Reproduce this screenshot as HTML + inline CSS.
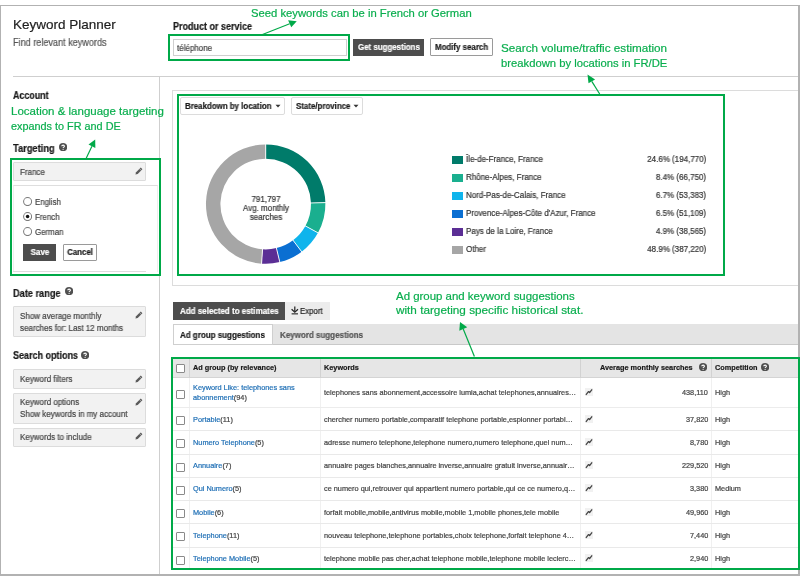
<!DOCTYPE html>
<html><head><meta charset="utf-8"><style>
html,body{margin:0;padding:0;background:#fff;}
#root{position:relative;width:800px;height:576px;overflow:hidden;background:#fff;font-family:"Liberation Sans",sans-serif;}
.t{position:absolute;white-space:nowrap;line-height:1;will-change:transform;-webkit-text-stroke:0.2px currentColor;}
.r{position:absolute;}
</style></head><body><div id="root">
<div class="r" style="left:0.00px;top:5.00px;width:800.00px;height:571.00px;border-top:1px solid #b2b2b2;border-left:1px solid #b2b2b2;border-right:2px solid #b2b2b2;border-bottom:2px solid #b2b2b2;box-sizing:border-box;"></div>
<div class="t" style="left:13.00px;top:17.77px;font-size:13.5px;font-weight:400;color:#1e1e1e;">Keyword Planner</div>
<div class="t" style="left:13.00px;top:37.85px;font-size:10.1px;font-weight:400;color:#555;transform:scaleX(0.9010);transform-origin:0 0;">Find relevant keywords</div>
<div class="r" style="left:13.00px;top:76.00px;width:785.00px;height:1.00px;background:#cfcfcf;"></div>
<div class="r" style="left:159.00px;top:76.00px;width:1.00px;height:498.00px;background:#cfcfcf;"></div>
<div class="t" style="left:173.20px;top:21.65px;font-size:10.1px;font-weight:700;color:#1a1a1a;transform:scaleX(0.8911);transform-origin:0 0;">Product or service</div>
<div class="r" style="left:172.50px;top:39.00px;width:174.00px;height:17.00px;border:1px solid #cfcfcf;box-sizing:border-box;background:#fff;"></div>
<div class="t" style="left:176.60px;top:43.57px;font-size:8.3px;font-weight:400;color:#444;transform:scaleX(0.9639);transform-origin:0 0;">téléphone</div>
<div class="r" style="left:168.20px;top:34.00px;width:181.60px;height:26.70px;border:2px solid #00a948;box-sizing:border-box;"></div>
<div class="r" style="left:353.00px;top:39.00px;width:71.00px;height:17.00px;background:#4d4d4d;"></div>
<div class="t" style="left:357.50px;top:43.17px;font-size:8.3px;font-weight:700;color:#fff;transform:scaleX(0.9518);transform-origin:0 0;">Get suggestions</div>
<div class="r" style="left:430.00px;top:38.00px;width:63.00px;height:18.00px;border:1px solid #9a9a9a;box-sizing:border-box;background:#fff;border-radius:1px;"></div>
<div class="t" style="left:434.80px;top:43.17px;font-size:8.3px;font-weight:700;color:#1a1a1a;transform:scaleX(0.9518);transform-origin:0 0;">Modify search</div>
<div class="t" style="left:251.40px;top:8.18px;font-size:11.25px;font-weight:400;color:#0aae4e;">Seed keywords can be in French or German</div>
<div class="t" style="left:501.25px;top:41.80px;font-size:11.7px;font-weight:400;color:#0aae4e;">Search volume/traffic estimation</div>
<div class="t" style="left:501.25px;top:57.78px;font-size:11.25px;font-weight:400;color:#0aae4e;">breakdown by locations in FR/DE</div>
<div class="t" style="left:12.80px;top:90.85px;font-size:10.1px;font-weight:700;color:#1a1a1a;transform:scaleX(0.8812);transform-origin:0 0;">Account</div>
<div class="t" style="left:11.00px;top:106.07px;font-size:11.5px;font-weight:400;color:#0aae4e;">Location &amp; language targeting</div>
<div class="t" style="left:11.00px;top:120.92px;font-size:10.85px;font-weight:400;color:#0aae4e;">expands to FR and DE</div>
<div class="t" style="left:13.20px;top:144.15px;font-size:10.1px;font-weight:700;color:#1a1a1a;transform:scaleX(0.9208);transform-origin:0 0;">Targeting</div>
<svg class="r" style="left:58.90px;top:142.90px" width="8.2" height="8.2" viewBox="0 0 10 10"><circle cx="5" cy="5" r="5" fill="#505050"/><path d="M3.4 3.9 C3.4 2.2 6.6 2.2 6.6 3.9 C6.6 5 5 5 5 6.2" stroke="#fff" stroke-width="1.3" fill="none"/><circle cx="5" cy="7.7" r="0.75" fill="#fff"/></svg>
<div class="r" style="left:12.90px;top:162.20px;width:132.70px;height:19.30px;border:1px solid #dcdcdc;box-sizing:border-box;background:#f2f2f2;border-radius:1px;"></div>
<div class="t" style="left:19.90px;top:168.07px;font-size:8.3px;font-weight:400;color:#444;transform:scaleX(0.9639);transform-origin:0 0;">France</div>
<svg class="r" style="left:134px;top:166px" width="10" height="10" viewBox="0 0 10 10"><path d="M1.4 8.6 L2.1 6.3 L6.8 1.6 L8.4 3.2 L3.7 7.9 Z" fill="#5a5a5a"/><path d="M5.5 2.7 L7.3 4.5" stroke="#f2f2f2" stroke-width="0.55"/></svg>
<div class="r" style="left:12.90px;top:185.00px;width:145.10px;height:87.00px;border-top:1px solid #dedede;border-left:1px solid #eee;border-right:1px solid #eee;box-sizing:border-box;background:#fff;"></div>
<div class="r" style="left:12.90px;top:270.50px;width:132.70px;height:1.00px;background:#dcdcdc;"></div>
<svg class="r" style="left:23.10px;top:196.60px" width="9.2" height="9.2" viewBox="0 0 10 10"><circle cx="5" cy="5" r="4.35" fill="#fff" stroke="#7a7a7a" stroke-width="1.1"/></svg>
<svg class="r" style="left:23.10px;top:211.60px" width="9.2" height="9.2" viewBox="0 0 10 10"><circle cx="5" cy="5" r="4.35" fill="#fff" stroke="#7a7a7a" stroke-width="1.1"/><circle cx="5" cy="5" r="1.9" fill="#111"/></svg>
<svg class="r" style="left:23.10px;top:226.60px" width="9.2" height="9.2" viewBox="0 0 10 10"><circle cx="5" cy="5" r="4.35" fill="#fff" stroke="#7a7a7a" stroke-width="1.1"/></svg>
<div class="t" style="left:35.40px;top:197.57px;font-size:8.3px;font-weight:400;color:#444;transform:scaleX(0.9518);transform-origin:0 0;">English</div>
<div class="t" style="left:35.40px;top:212.57px;font-size:8.3px;font-weight:400;color:#444;transform:scaleX(0.9518);transform-origin:0 0;">French</div>
<div class="t" style="left:35.40px;top:227.57px;font-size:8.3px;font-weight:400;color:#444;transform:scaleX(0.9518);transform-origin:0 0;">German</div>
<div class="r" style="left:23.30px;top:243.70px;width:33.10px;height:16.90px;background:#4d4d4d;"></div>
<div class="t" style="left:-60.15px;width:200px;text-align:center;top:248.07px;font-size:8.3px;font-weight:700;color:#fff;transform:scaleX(0.9518);transform-origin:50% 0;">Save</div>
<div class="r" style="left:63.20px;top:243.70px;width:34.30px;height:16.90px;border:1px solid #9a9a9a;box-sizing:border-box;background:#fff;border-radius:1px;"></div>
<div class="t" style="left:-19.65px;width:200px;text-align:center;top:248.07px;font-size:8.3px;font-weight:700;color:#1a1a1a;transform:scaleX(0.9518);transform-origin:50% 0;">Cancel</div>
<div class="r" style="left:10.20px;top:158.30px;width:150.50px;height:117.70px;border:2px solid #00a948;box-sizing:border-box;"></div>
<div class="t" style="left:13.00px;top:288.75px;font-size:10.1px;font-weight:700;color:#1a1a1a;transform:scaleX(0.9109);transform-origin:0 0;">Date range</div>
<svg class="r" style="left:64.50px;top:287.30px" width="8.2" height="8.2" viewBox="0 0 10 10"><circle cx="5" cy="5" r="5" fill="#505050"/><path d="M3.4 3.9 C3.4 2.2 6.6 2.2 6.6 3.9 C6.6 5 5 5 5 6.2" stroke="#fff" stroke-width="1.3" fill="none"/><circle cx="5" cy="7.7" r="0.75" fill="#fff"/></svg>
<div class="r" style="left:12.60px;top:306.40px;width:133.00px;height:30.60px;border:1px solid #dcdcdc;box-sizing:border-box;background:#f2f2f2;border-radius:1px;"></div>
<div class="t" style="left:20.00px;top:312.27px;font-size:8.3px;font-weight:400;color:#444;transform:scaleX(0.9639);transform-origin:0 0;">Show average monthly</div>
<div class="t" style="left:20.00px;top:323.67px;font-size:8.3px;font-weight:400;color:#444;transform:scaleX(0.9639);transform-origin:0 0;">searches for: Last 12 months</div>
<svg class="r" style="left:133.8px;top:310px" width="10" height="10" viewBox="0 0 10 10"><path d="M1.4 8.6 L2.1 6.3 L6.8 1.6 L8.4 3.2 L3.7 7.9 Z" fill="#5a5a5a"/><path d="M5.5 2.7 L7.3 4.5" stroke="#f2f2f2" stroke-width="0.55"/></svg>
<div class="t" style="left:13.00px;top:351.15px;font-size:10.1px;font-weight:700;color:#1a1a1a;transform:scaleX(0.8911);transform-origin:0 0;">Search options</div>
<svg class="r" style="left:81.30px;top:350.90px" width="8.2" height="8.2" viewBox="0 0 10 10"><circle cx="5" cy="5" r="5" fill="#505050"/><path d="M3.4 3.9 C3.4 2.2 6.6 2.2 6.6 3.9 C6.6 5 5 5 5 6.2" stroke="#fff" stroke-width="1.3" fill="none"/><circle cx="5" cy="7.7" r="0.75" fill="#fff"/></svg>
<div class="r" style="left:12.60px;top:369.00px;width:133.00px;height:20.00px;border:1px solid #dcdcdc;box-sizing:border-box;background:#f2f2f2;border-radius:1px;"></div>
<div class="t" style="left:20.00px;top:375.27px;font-size:8.3px;font-weight:400;color:#444;transform:scaleX(0.9639);transform-origin:0 0;">Keyword filters</div>
<svg class="r" style="left:133.8px;top:373.5px" width="10" height="10" viewBox="0 0 10 10"><path d="M1.4 8.6 L2.1 6.3 L6.8 1.6 L8.4 3.2 L3.7 7.9 Z" fill="#5a5a5a"/><path d="M5.5 2.7 L7.3 4.5" stroke="#f2f2f2" stroke-width="0.55"/></svg>
<div class="r" style="left:12.60px;top:393.00px;width:133.00px;height:31.00px;border:1px solid #dcdcdc;box-sizing:border-box;background:#f2f2f2;border-radius:1px;"></div>
<div class="t" style="left:20.00px;top:398.07px;font-size:8.3px;font-weight:400;color:#444;transform:scaleX(0.9639);transform-origin:0 0;">Keyword options</div>
<div class="t" style="left:20.00px;top:410.07px;font-size:8.3px;font-weight:400;color:#444;transform:scaleX(0.9639);transform-origin:0 0;">Show keywords in my account</div>
<svg class="r" style="left:133.8px;top:396.5px" width="10" height="10" viewBox="0 0 10 10"><path d="M1.4 8.6 L2.1 6.3 L6.8 1.6 L8.4 3.2 L3.7 7.9 Z" fill="#5a5a5a"/><path d="M5.5 2.7 L7.3 4.5" stroke="#f2f2f2" stroke-width="0.55"/></svg>
<div class="r" style="left:12.60px;top:427.60px;width:133.00px;height:19.20px;border:1px solid #dcdcdc;box-sizing:border-box;background:#f2f2f2;border-radius:1px;"></div>
<div class="t" style="left:20.00px;top:432.67px;font-size:8.3px;font-weight:400;color:#444;transform:scaleX(0.9639);transform-origin:0 0;">Keywords to include</div>
<svg class="r" style="left:133.8px;top:431px" width="10" height="10" viewBox="0 0 10 10"><path d="M1.4 8.6 L2.1 6.3 L6.8 1.6 L8.4 3.2 L3.7 7.9 Z" fill="#5a5a5a"/><path d="M5.5 2.7 L7.3 4.5" stroke="#f2f2f2" stroke-width="0.55"/></svg>
<div class="r" style="left:172.00px;top:90.00px;width:626.00px;height:196.00px;border-top:1px solid #dcdcdc;border-left:1px solid #dcdcdc;border-bottom:1px solid #dcdcdc;box-sizing:border-box;background:#fff;"></div>
<div class="r" style="left:180.00px;top:97.00px;width:105.00px;height:17.50px;border:1px solid #dcdcdc;box-sizing:border-box;background:#fff;border-radius:2px;"></div>
<div class="t" style="left:184.50px;top:101.57px;font-size:8.3px;font-weight:700;color:#1a1a1a;transform:scaleX(0.9518);transform-origin:0 0;">Breakdown by location</div>
<svg class="r" style="left:274.5px;top:104px" width="6" height="4" viewBox="0 0 6 4"><path d="M0.5 0.8 L5.5 0.8 L3 3.4 Z" fill="#333"/></svg>
<div class="r" style="left:291.00px;top:97.00px;width:72.00px;height:17.50px;border:1px solid #dcdcdc;box-sizing:border-box;background:#fff;border-radius:2px;"></div>
<div class="t" style="left:295.75px;top:101.57px;font-size:8.3px;font-weight:700;color:#1a1a1a;transform:scaleX(0.9518);transform-origin:0 0;">State/province</div>
<svg class="r" style="left:353.3px;top:104px" width="6" height="4" viewBox="0 0 6 4"><path d="M0.5 0.8 L5.5 0.8 L3 3.4 Z" fill="#333"/></svg>
<svg class="r" style="left:0;top:0" width="800" height="576"><path d="M265.70 144.40 A59.7 59.7 0 0 1 325.38 202.60 L310.99 202.96 A45.3 45.3 0 0 0 265.70 158.80 Z" fill="#007b6a"/><path d="M325.38 202.60 A59.7 59.7 0 0 1 318.02 232.86 L305.40 225.92 A45.3 45.3 0 0 0 310.99 202.96 Z" fill="#1aaf8f"/><path d="M318.02 232.86 A59.7 59.7 0 0 1 301.69 251.73 L293.01 240.24 A45.3 45.3 0 0 0 305.40 225.92 Z" fill="#0fb4ec"/><path d="M301.69 251.73 A59.7 59.7 0 0 1 279.82 262.11 L276.41 248.11 A45.3 45.3 0 0 0 293.01 240.24 Z" fill="#0b6fd2"/><path d="M279.82 262.11 A59.7 59.7 0 0 1 261.58 263.66 L262.57 249.29 A45.3 45.3 0 0 0 276.41 248.11 Z" fill="#5b2e95"/><path d="M261.58 263.66 A59.7 59.7 0 0 1 265.70 144.40 L265.70 158.80 A45.3 45.3 0 0 0 262.57 249.29 Z" fill="#a6a6a6"/><line x1="265.70" y1="159.80" x2="265.70" y2="143.40" stroke="#fff" stroke-width="0.9"/><line x1="309.99" y1="202.99" x2="326.38" y2="202.57" stroke="#fff" stroke-width="0.9"/><line x1="304.52" y1="225.44" x2="318.89" y2="233.34" stroke="#fff" stroke-width="0.9"/><line x1="292.41" y1="239.44" x2="302.30" y2="252.53" stroke="#fff" stroke-width="0.9"/><line x1="276.18" y1="247.14" x2="280.06" y2="263.08" stroke="#fff" stroke-width="0.9"/><line x1="262.64" y1="248.29" x2="261.51" y2="264.66" stroke="#fff" stroke-width="0.9"/></svg>
<div class="t" style="left:165.70px;width:200px;text-align:center;top:194.77px;font-size:8.3px;font-weight:400;color:#333;transform:scaleX(0.9639);transform-origin:50% 0;">791,797</div>
<div class="t" style="left:165.70px;width:200px;text-align:center;top:203.97px;font-size:8.3px;font-weight:400;color:#333;transform:scaleX(0.9639);transform-origin:50% 0;">Avg. monthly</div>
<div class="t" style="left:165.70px;width:200px;text-align:center;top:213.17px;font-size:8.3px;font-weight:400;color:#333;transform:scaleX(0.9639);transform-origin:50% 0;">searches</div>
<div class="r" style="left:452.00px;top:156.00px;width:10.60px;height:7.60px;background:#007b6a;"></div>
<div class="t" style="left:466.00px;top:155.17px;font-size:8.3px;font-weight:400;color:#333;transform:scaleX(0.9639);transform-origin:0 0;">Île-de-France, France</div>
<div class="t" style="right:93.50px;top:155.17px;font-size:8.3px;font-weight:400;color:#333;transform:scaleX(0.9639);transform-origin:100% 0;">24.6% (194,770)</div>
<div class="r" style="left:452.00px;top:174.00px;width:10.60px;height:7.60px;background:#1aaf8f;"></div>
<div class="t" style="left:466.00px;top:173.17px;font-size:8.3px;font-weight:400;color:#333;transform:scaleX(0.9639);transform-origin:0 0;">Rhône-Alpes, France</div>
<div class="t" style="right:93.50px;top:173.17px;font-size:8.3px;font-weight:400;color:#333;transform:scaleX(0.9639);transform-origin:100% 0;">8.4% (66,750)</div>
<div class="r" style="left:452.00px;top:192.00px;width:10.60px;height:7.60px;background:#0fb4ec;"></div>
<div class="t" style="left:466.00px;top:191.17px;font-size:8.3px;font-weight:400;color:#333;transform:scaleX(0.9639);transform-origin:0 0;">Nord-Pas-de-Calais, France</div>
<div class="t" style="right:93.50px;top:191.17px;font-size:8.3px;font-weight:400;color:#333;transform:scaleX(0.9639);transform-origin:100% 0;">6.7% (53,383)</div>
<div class="r" style="left:452.00px;top:210.00px;width:10.60px;height:7.60px;background:#0b6fd2;"></div>
<div class="t" style="left:466.00px;top:209.17px;font-size:8.3px;font-weight:400;color:#333;transform:scaleX(0.9639);transform-origin:0 0;">Provence-Alpes-Côte d'Azur, France</div>
<div class="t" style="right:93.50px;top:209.17px;font-size:8.3px;font-weight:400;color:#333;transform:scaleX(0.9639);transform-origin:100% 0;">6.5% (51,109)</div>
<div class="r" style="left:452.00px;top:228.00px;width:10.60px;height:7.60px;background:#5b2e95;"></div>
<div class="t" style="left:466.00px;top:227.17px;font-size:8.3px;font-weight:400;color:#333;transform:scaleX(0.9639);transform-origin:0 0;">Pays de la Loire, France</div>
<div class="t" style="right:93.50px;top:227.17px;font-size:8.3px;font-weight:400;color:#333;transform:scaleX(0.9639);transform-origin:100% 0;">4.9% (38,565)</div>
<div class="r" style="left:452.00px;top:246.00px;width:10.60px;height:7.60px;background:#a6a6a6;"></div>
<div class="t" style="left:466.00px;top:245.17px;font-size:8.3px;font-weight:400;color:#333;transform:scaleX(0.9639);transform-origin:0 0;">Other</div>
<div class="t" style="right:93.50px;top:245.17px;font-size:8.3px;font-weight:400;color:#333;transform:scaleX(0.9639);transform-origin:100% 0;">48.9% (387,220)</div>
<div class="r" style="left:177.00px;top:93.60px;width:547.50px;height:182.40px;border:2px solid #00a948;box-sizing:border-box;"></div>
<div class="t" style="left:396.25px;top:290.61px;font-size:11.45px;font-weight:400;color:#0aae4e;">Ad group and keyword suggestions</div>
<div class="t" style="left:396.25px;top:303.75px;font-size:11.75px;font-weight:400;color:#0aae4e;">with targeting specific historical stat.</div>
<div class="r" style="left:173.00px;top:301.80px;width:112.00px;height:18.70px;background:#4d4d4d;"></div>
<div class="t" style="left:179.60px;top:306.77px;font-size:8.3px;font-weight:700;color:#fff;transform:scaleX(0.9639);transform-origin:0 0;">Add selected to estimates</div>
<div class="r" style="left:285.00px;top:301.80px;width:45.00px;height:18.70px;background:#ececec;"></div>
<svg class="r" style="left:290px;top:305px" width="10" height="10" viewBox="0 0 10 10"><path d="M4.8 1.5 V6.6" stroke="#222" stroke-width="1.2"/><path d="M1.6 4.2 L4.8 7.2 L8 4.2" stroke="#222" stroke-width="1.2" fill="none"/><rect x="1.6" y="8.3" width="6.4" height="1.1" fill="#222"/></svg>
<div class="t" style="left:300.30px;top:306.67px;font-size:8.3px;font-weight:400;color:#222;transform:scaleX(0.9398);transform-origin:0 0;">Export</div>
<div class="r" style="left:173.00px;top:323.90px;width:624.50px;height:21.10px;background:#e4e4e4;border-bottom:1px solid #c9c9c9;box-sizing:border-box;"></div>
<div class="r" style="left:173.00px;top:323.50px;width:99.60px;height:21.50px;background:#fff;border:1px solid #cfcfcf;box-sizing:border-box;"></div>
<div class="t" style="left:179.80px;top:330.57px;font-size:8.3px;font-weight:700;color:#1a1a1a;transform:scaleX(0.9639);transform-origin:0 0;">Ad group suggestions</div>
<div class="t" style="left:280.20px;top:330.57px;font-size:8.3px;font-weight:700;color:#555;transform:scaleX(0.9639);transform-origin:0 0;">Keyword suggestions</div>
<div class="r" style="left:173.00px;top:358.50px;width:625.00px;height:19.50px;background:#e6e6e6;border-bottom:1px solid #d4d4d4;box-sizing:border-box;"></div>
<div class="r" style="left:189.30px;top:358.50px;width:1.00px;height:19.50px;background:#d2d2d2;"></div>
<div class="r" style="left:189.30px;top:378.00px;width:1.00px;height:190.00px;background:#f0f0f0;"></div>
<div class="r" style="left:320.20px;top:358.50px;width:1.00px;height:19.50px;background:#d2d2d2;"></div>
<div class="r" style="left:320.20px;top:378.00px;width:1.00px;height:190.00px;background:#f0f0f0;"></div>
<div class="r" style="left:580.30px;top:358.50px;width:1.00px;height:19.50px;background:#d2d2d2;"></div>
<div class="r" style="left:580.30px;top:378.00px;width:1.00px;height:190.00px;background:#f0f0f0;"></div>
<div class="r" style="left:711.30px;top:358.50px;width:1.00px;height:19.50px;background:#d2d2d2;"></div>
<div class="r" style="left:711.30px;top:378.00px;width:1.00px;height:190.00px;background:#f0f0f0;"></div>
<div class="r" style="left:176.25px;top:364.10px;width:9.00px;height:9.00px;border:1px solid #8a8a8a;box-sizing:border-box;background:#fff;border-radius:1px;"></div>
<div class="t" style="left:192.50px;top:363.52px;font-size:7.3px;font-weight:700;color:#1a1a1a;">Ad group (by relevance)</div>
<div class="t" style="left:323.75px;top:363.52px;font-size:7.3px;font-weight:700;color:#1a1a1a;">Keywords</div>
<div class="t" style="left:599.80px;top:363.52px;font-size:7.3px;font-weight:700;color:#1a1a1a;">Average monthly searches</div>
<svg class="r" style="left:699.00px;top:362.60px" width="8.2" height="8.2" viewBox="0 0 10 10"><circle cx="5" cy="5" r="5" fill="#505050"/><path d="M3.4 3.9 C3.4 2.2 6.6 2.2 6.6 3.9 C6.6 5 5 5 5 6.2" stroke="#fff" stroke-width="1.3" fill="none"/><circle cx="5" cy="7.7" r="0.75" fill="#fff"/></svg>
<div class="t" style="left:715.00px;top:363.52px;font-size:7.3px;font-weight:700;color:#1a1a1a;">Competition</div>
<svg class="r" style="left:761.30px;top:362.60px" width="8.2" height="8.2" viewBox="0 0 10 10"><circle cx="5" cy="5" r="5" fill="#505050"/><path d="M3.4 3.9 C3.4 2.2 6.6 2.2 6.6 3.9 C6.6 5 5 5 5 6.2" stroke="#fff" stroke-width="1.3" fill="none"/><circle cx="5" cy="7.7" r="0.75" fill="#fff"/></svg>
<div class="r" style="left:176.25px;top:389.70px;width:9.00px;height:9.00px;border:1px solid #8a8a8a;box-sizing:border-box;background:#fff;border-radius:1px;"></div>
<div class="t" style="left:192.50px;top:383.98px;font-size:7.35px;font-weight:400;color:#1f6fb5;">Keyword Like: telephones sans</div>
<div class="t" style="left:192.50px;top:394.48px;font-size:7.35px;font-weight:400;color:#444;"><span style="color:#1f6fb5">abonnement</span>(94)</div>
<div class="t" style="left:324.20px;top:389.10px;font-size:7.33px;font-weight:400;color:#444;">telephones sans abonnement,accessoire lumia,achat telephones,annuaires…</div>
<div class="r" style="left:585.00px;top:388.00px;width:7.50px;height:8.00px;background:#f1f1f1;"></div>
<svg class="r" style="left:585px;top:388px" width="8" height="8" viewBox="0 0 8 8"><path d="M0.9 6.8 L3.4 3.6 L4.6 4.6 L7.1 1.4" stroke="#444" stroke-width="1.3" fill="none" stroke-linejoin="round"/></svg>
<div class="t" style="right:92.00px;top:388.92px;font-size:7.3px;font-weight:400;color:#444;">438,110</div>
<div class="t" style="left:714.80px;top:388.92px;font-size:7.3px;font-weight:400;color:#444;">High</div>
<div class="r" style="left:173.00px;top:407.10px;width:625.00px;height:1.00px;background:#ececec;"></div>
<div class="r" style="left:176.25px;top:416.10px;width:9.00px;height:9.00px;border:1px solid #8a8a8a;box-sizing:border-box;background:#fff;border-radius:1px;"></div>
<div class="t" style="left:192.50px;top:415.58px;font-size:7.35px;font-weight:400;color:#444;"><span style="color:#1f6fb5">Portable</span>(11)</div>
<div class="t" style="left:324.20px;top:415.60px;font-size:7.33px;font-weight:400;color:#444;">chercher numero portable,comparatif telephone portable,espionner portabl…</div>
<div class="r" style="left:585.00px;top:414.60px;width:7.50px;height:8.00px;background:#f1f1f1;"></div>
<svg class="r" style="left:585px;top:414.6px" width="8" height="8" viewBox="0 0 8 8"><path d="M0.9 6.8 L3.4 3.6 L4.6 4.6 L7.1 1.4" stroke="#444" stroke-width="1.3" fill="none" stroke-linejoin="round"/></svg>
<div class="t" style="right:92.00px;top:415.62px;font-size:7.3px;font-weight:400;color:#444;">37,820</div>
<div class="t" style="left:714.80px;top:415.62px;font-size:7.3px;font-weight:400;color:#444;">High</div>
<div class="r" style="left:173.00px;top:430.25px;width:625.00px;height:1.20px;background:#e9e9e9;"></div>
<div class="r" style="left:176.25px;top:439.35px;width:9.00px;height:9.00px;border:1px solid #8a8a8a;box-sizing:border-box;background:#fff;border-radius:1px;"></div>
<div class="t" style="left:192.50px;top:438.83px;font-size:7.35px;font-weight:400;color:#444;"><span style="color:#1f6fb5">Numero Telephone</span>(5)</div>
<div class="t" style="left:324.20px;top:438.85px;font-size:7.33px;font-weight:400;color:#444;">adresse numero telephone,telephone numero,numero telephone,quel num…</div>
<div class="r" style="left:585.00px;top:437.85px;width:7.50px;height:8.00px;background:#f1f1f1;"></div>
<svg class="r" style="left:585px;top:437.85px" width="8" height="8" viewBox="0 0 8 8"><path d="M0.9 6.8 L3.4 3.6 L4.6 4.6 L7.1 1.4" stroke="#444" stroke-width="1.3" fill="none" stroke-linejoin="round"/></svg>
<div class="t" style="right:92.00px;top:438.87px;font-size:7.3px;font-weight:400;color:#444;">8,780</div>
<div class="t" style="left:714.80px;top:438.87px;font-size:7.3px;font-weight:400;color:#444;">High</div>
<div class="r" style="left:173.00px;top:453.50px;width:625.00px;height:1.20px;background:#e9e9e9;"></div>
<div class="r" style="left:176.25px;top:462.60px;width:9.00px;height:9.00px;border:1px solid #8a8a8a;box-sizing:border-box;background:#fff;border-radius:1px;"></div>
<div class="t" style="left:192.50px;top:462.08px;font-size:7.35px;font-weight:400;color:#444;"><span style="color:#1f6fb5">Annuaire</span>(7)</div>
<div class="t" style="left:324.20px;top:462.10px;font-size:7.33px;font-weight:400;color:#444;">annuaire pages blanches,annuaire inverse,annuaire gratuit inverse,annuair…</div>
<div class="r" style="left:585.00px;top:461.10px;width:7.50px;height:8.00px;background:#f1f1f1;"></div>
<svg class="r" style="left:585px;top:461.1px" width="8" height="8" viewBox="0 0 8 8"><path d="M0.9 6.8 L3.4 3.6 L4.6 4.6 L7.1 1.4" stroke="#444" stroke-width="1.3" fill="none" stroke-linejoin="round"/></svg>
<div class="t" style="right:92.00px;top:462.12px;font-size:7.3px;font-weight:400;color:#444;">229,520</div>
<div class="t" style="left:714.80px;top:462.12px;font-size:7.3px;font-weight:400;color:#444;">High</div>
<div class="r" style="left:173.00px;top:476.75px;width:625.00px;height:1.20px;background:#e9e9e9;"></div>
<div class="r" style="left:176.25px;top:485.85px;width:9.00px;height:9.00px;border:1px solid #8a8a8a;box-sizing:border-box;background:#fff;border-radius:1px;"></div>
<div class="t" style="left:192.50px;top:485.33px;font-size:7.35px;font-weight:400;color:#444;"><span style="color:#1f6fb5">Qui Numero</span>(5)</div>
<div class="t" style="left:324.20px;top:485.35px;font-size:7.33px;font-weight:400;color:#444;">ce numero qui,retrouver qui appartient numero portable,qui ce ce numero,q…</div>
<div class="r" style="left:585.00px;top:484.35px;width:7.50px;height:8.00px;background:#f1f1f1;"></div>
<svg class="r" style="left:585px;top:484.35px" width="8" height="8" viewBox="0 0 8 8"><path d="M0.9 6.8 L3.4 3.6 L4.6 4.6 L7.1 1.4" stroke="#444" stroke-width="1.3" fill="none" stroke-linejoin="round"/></svg>
<div class="t" style="right:92.00px;top:485.37px;font-size:7.3px;font-weight:400;color:#444;">3,380</div>
<div class="t" style="left:714.80px;top:485.37px;font-size:7.3px;font-weight:400;color:#444;">Medium</div>
<div class="r" style="left:173.00px;top:500.00px;width:625.00px;height:1.20px;background:#e9e9e9;"></div>
<div class="r" style="left:176.25px;top:509.10px;width:9.00px;height:9.00px;border:1px solid #8a8a8a;box-sizing:border-box;background:#fff;border-radius:1px;"></div>
<div class="t" style="left:192.50px;top:508.58px;font-size:7.35px;font-weight:400;color:#444;"><span style="color:#1f6fb5">Mobile</span>(6)</div>
<div class="t" style="left:324.20px;top:508.60px;font-size:7.33px;font-weight:400;color:#444;">forfait mobile,mobile,antivirus mobile,mobile 1,mobile phones,tele mobile</div>
<div class="r" style="left:585.00px;top:507.60px;width:7.50px;height:8.00px;background:#f1f1f1;"></div>
<svg class="r" style="left:585px;top:507.6px" width="8" height="8" viewBox="0 0 8 8"><path d="M0.9 6.8 L3.4 3.6 L4.6 4.6 L7.1 1.4" stroke="#444" stroke-width="1.3" fill="none" stroke-linejoin="round"/></svg>
<div class="t" style="right:92.00px;top:508.62px;font-size:7.3px;font-weight:400;color:#444;">49,960</div>
<div class="t" style="left:714.80px;top:508.62px;font-size:7.3px;font-weight:400;color:#444;">High</div>
<div class="r" style="left:173.00px;top:523.25px;width:625.00px;height:1.20px;background:#e9e9e9;"></div>
<div class="r" style="left:176.25px;top:532.35px;width:9.00px;height:9.00px;border:1px solid #8a8a8a;box-sizing:border-box;background:#fff;border-radius:1px;"></div>
<div class="t" style="left:192.50px;top:531.83px;font-size:7.35px;font-weight:400;color:#444;"><span style="color:#1f6fb5">Telephone</span>(11)</div>
<div class="t" style="left:324.20px;top:531.85px;font-size:7.33px;font-weight:400;color:#444;">nouveau telephone,telephone portables,choix telephone,forfait telephone 4…</div>
<div class="r" style="left:585.00px;top:530.85px;width:7.50px;height:8.00px;background:#f1f1f1;"></div>
<svg class="r" style="left:585px;top:530.85px" width="8" height="8" viewBox="0 0 8 8"><path d="M0.9 6.8 L3.4 3.6 L4.6 4.6 L7.1 1.4" stroke="#444" stroke-width="1.3" fill="none" stroke-linejoin="round"/></svg>
<div class="t" style="right:92.00px;top:531.87px;font-size:7.3px;font-weight:400;color:#444;">7,440</div>
<div class="t" style="left:714.80px;top:531.87px;font-size:7.3px;font-weight:400;color:#444;">High</div>
<div class="r" style="left:173.00px;top:546.50px;width:625.00px;height:1.20px;background:#e9e9e9;"></div>
<div class="r" style="left:176.25px;top:555.60px;width:9.00px;height:9.00px;border:1px solid #8a8a8a;box-sizing:border-box;background:#fff;border-radius:1px;"></div>
<div class="t" style="left:192.50px;top:555.08px;font-size:7.35px;font-weight:400;color:#444;"><span style="color:#1f6fb5">Telephone Mobile</span>(5)</div>
<div class="t" style="left:324.20px;top:555.10px;font-size:7.33px;font-weight:400;color:#444;">telephone mobile pas cher,achat telephone mobile,telephone mobile leclerc…</div>
<div class="r" style="left:585.00px;top:554.10px;width:7.50px;height:8.00px;background:#f1f1f1;"></div>
<svg class="r" style="left:585px;top:554.1px" width="8" height="8" viewBox="0 0 8 8"><path d="M0.9 6.8 L3.4 3.6 L4.6 4.6 L7.1 1.4" stroke="#444" stroke-width="1.3" fill="none" stroke-linejoin="round"/></svg>
<div class="t" style="right:92.00px;top:555.12px;font-size:7.3px;font-weight:400;color:#444;">2,940</div>
<div class="t" style="left:714.80px;top:555.12px;font-size:7.3px;font-weight:400;color:#444;">High</div>
<div class="r" style="left:171.20px;top:356.70px;width:628.80px;height:213.10px;border:2px solid #00a948;box-sizing:border-box;"></div>
<svg class="r" style="left:0;top:0" width="800" height="576"><line x1="262.5" y1="34.5" x2="289.68" y2="23.75" stroke="#00a948" stroke-width="1.2"/><path d="M296.75 21.25 L288.1 20.3 L291.25 27.2 Z" fill="#00a948"/><line x1="599.7" y1="94" x2="591.80" y2="81.35" stroke="#00a948" stroke-width="1.2"/><path d="M587.5 74.6 L595.1 79.4 L588.5 83.3 Z" fill="#00a948"/><line x1="86.2" y1="158.2" x2="91.92" y2="146.25" stroke="#00a948" stroke-width="1.2"/><path d="M95.2 139.4 L88.5 144.6 L95.35 147.9 Z" fill="#00a948"/><line x1="474.4" y1="356.5" x2="463.25" y2="329.05" stroke="#00a948" stroke-width="1.2"/><path d="M460 322.1 L467.2 327.3 L459.3 330.8 Z" fill="#00a948"/></svg>
</div></body></html>
